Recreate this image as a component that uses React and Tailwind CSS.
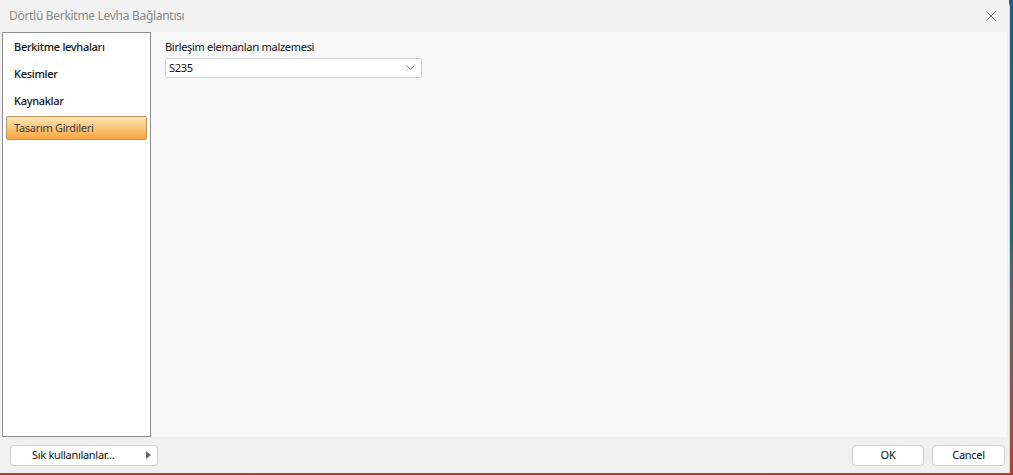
export default function App() {
  const items = ['Berkitme levhaları', 'Kesimler', 'Kaynaklar', 'Tasarım Girdileri'];
  const selected = 3;

  return (
    <div className="w-[1013px] h-[475px] overflow-hidden bg-gradient-to-b from-[#1d5a8a] via-[#1f6a7a] to-[#b0402a] font-['Noto_Sans','Open_Sans',sans-serif] tracking-[-0.3px]">
      <div className="w-[1010px] h-[473px] bg-[#f0f0f0] rounded-tr-[7px] border-r border-[#d8d8d8] flex flex-col">
        {/* Title bar */}
        <div className="h-[32px] flex items-center justify-between pl-[9px] pr-[12px] shrink-0 bg-[#f2f2f2]">
          <span className="text-[12px] text-[#8a8a8a]">Dörtlü Berkitme Levha Bağlantısı</span>
          <svg width="12" height="12" viewBox="0 0 12 12" className="text-[#777]">
            <path d="M1 1 L11 11 M11 1 L1 11" stroke="currentColor" strokeWidth="1" />
          </svg>
        </div>

        {/* Body */}
        <div className="flex flex-1 min-h-0 pl-[2px] pr-[2px]">
          <div className="w-[149px] bg-white border border-[#8e8e8e] flex flex-col gap-[3px] pt-[2px] px-[3px]">
            {items.map((item, i) => (
              <div
                key={item}
                className={
                  i === selected
                    ? "h-[24px] flex items-center pl-[7px] text-[11px] font-normal text-[#3d3d3d] rounded-[2px] border border-[#b99660] bg-gradient-to-b from-[#fde3b0] via-[#fbc77a] to-[#f8a43a]"
                    : "h-[24px] flex items-center pl-[8px] text-[11px] font-medium text-[#111]"
                }
              >
                {item}
              </div>
            ))}
          </div>
          <div className="flex-1 bg-[#f8f8f8] pl-[14px] pt-[7px]">
            <div className="text-[11px] text-[#111] leading-[16px]">Birleşim elemanları malzemesi</div>
            <div className="mt-[3px] w-[257px] h-[20px] bg-white border border-[#d2d2d2] rounded-[2px] flex items-center justify-between pl-[3px] pr-[6px]">
              <span className="text-[11px] text-[#111]">S235</span>
              <svg width="9" height="6" viewBox="0 0 9 6">
                <path d="M0.5 0.5 L4.5 4.5 L8.5 0.5" stroke="#777" strokeWidth="1" fill="none" />
              </svg>
            </div>
          </div>
        </div>

        {/* Footer */}
        <div className="h-[36px] shrink-0 flex items-center justify-between pl-[10px] pr-[4px]">
          <div className="w-[148px] h-[21px] bg-white border border-[#cfcfcf] rounded-[4px] flex items-center pl-[21px] pr-[6px]">
            <span className="text-[11px] text-[#111] whitespace-nowrap">Sık kullanılanlar…</span>
            <svg width="5" height="8" viewBox="0 0 5 8" className="shrink-0 ml-auto">
              <path d="M0 0 L5 4 L0 8 Z" fill="#666" />
            </svg>
          </div>
          <div className="flex gap-[8px]">
            <div className="w-[72px] h-[21px] bg-white border border-[#cfcfcf] rounded-[4px] text-[11px] text-[#111] flex items-center justify-center">OK</div>
            <div className="w-[73px] h-[21px] bg-white border border-[#cfcfcf] rounded-[4px] text-[11px] text-[#111] flex items-center justify-center">Cancel</div>
          </div>
        </div>
      </div>
    </div>
  );
}
